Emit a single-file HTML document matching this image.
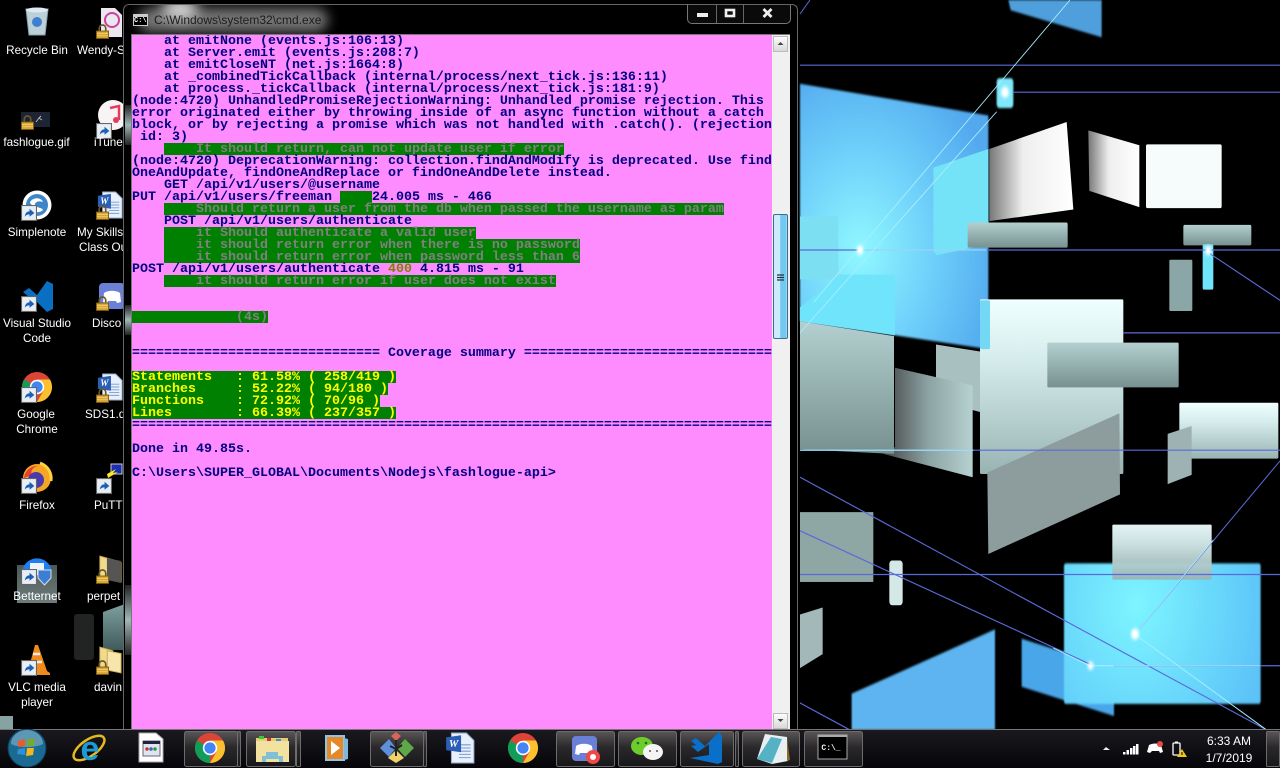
<!DOCTYPE html>
<html><head><meta charset="utf-8"><style>
html,body{margin:0;padding:0;background:#000;width:1280px;height:768px;overflow:hidden}
#bg{position:absolute;left:0;top:0}
#bg text{font-family:"Liberation Sans",sans-serif;font-size:11.7px;fill:#fff;text-anchor:middle}
#bg text.l{text-anchor:start}
#win{position:absolute;left:123px;top:4px;width:675px;height:726px;background:#000;border:1px solid #666;border-bottom:0;border-radius:6px 6px 0 0;box-sizing:border-box;overflow:hidden}
#glow{position:absolute;left:14px;top:3px;width:190px;height:24px;background:#8a8a8a;border-radius:12px;filter:blur(6px);opacity:.85}
#glow2{position:absolute;left:38px;top:-8px;width:36px;height:22px;background:#fff;border-radius:50%;filter:blur(7px);opacity:.8}
.sp{position:absolute;left:1px;width:6px;background:linear-gradient(#222,#9fb8b8 50%,#222)}
#title{position:absolute;left:30px;top:8px;font:12px "Liberation Sans",sans-serif;color:#1c1c1c;white-space:pre}
#ico{position:absolute;left:9px;top:9px;width:15px;height:12px;background:#000;border:1px solid #ccc;border-top:3px solid #ccc;box-sizing:border-box;color:#fff;font:bold 7px/8px "Liberation Mono",monospace;overflow:hidden}
#ctl{position:absolute;left:563px;top:-1px;width:104px;height:20px;border:1px solid #777;border-top:0;border-radius:0 0 5px 5px;box-sizing:border-box;background:#0a0a0a}
#ctl i{position:absolute;top:0;width:1px;height:19px;background:#666}
#inner{position:absolute;left:7px;top:29px;width:659px;height:696px;border:1px solid #777;border-bottom:0;box-sizing:border-box;background:#ff8cff}
#term{position:absolute;left:0;top:0;width:640px;height:696px;font:bold 13.34px/14px "Liberation Mono",monospace;color:#000080;white-space:pre;letter-spacing:0;overflow:hidden}
#term div{height:12px;line-height:14px}
.g,.y{display:inline-block;height:12px;line-height:14px;vertical-align:top;overflow:visible}
.g{background:#008000;color:#808080}.y{background:#008000;color:#ff0}.o{color:#808000}
#sb{position:absolute;left:640px;top:0;width:18px;height:696px;background:#f0f0f0}
.btn{position:absolute;left:1px;width:15px;height:16px;background:linear-gradient(#fdfdfd,#d8d8d8);border:1px solid #bbb;box-sizing:border-box}
#thumb{position:absolute;left:1px;top:179px;width:15px;height:125px;box-sizing:border-box;border:1px solid #3a6c94;border-radius:2px;background:linear-gradient(90deg,#cdeafa 0,#cdeafa 45%,#72c8ef 50%,#72c8ef 90%,#b4e2f7 100%)}
#tb{position:absolute;left:0;top:729px;width:1280px;height:39px;background:linear-gradient(rgba(26,26,32,.95),rgba(6,6,10,.95));border-top:1px solid #777;box-sizing:border-box}
#tbi{position:absolute;left:0;top:729px}
#tbi text{font-family:"Liberation Sans",sans-serif;font-size:12px;fill:#fff;text-anchor:middle}
</style></head><body>
<svg id="bg" width="1280" height="768" viewBox="0 0 1280 768">
<defs>
<filter id="b" x="-10%" y="-10%" width="120%" height="120%"><feGaussianBlur stdDeviation="2"/></filter>
<filter id="s" x="-50%" y="-50%" width="200%" height="200%"><feGaussianBlur stdDeviation="4"/></filter>
<linearGradient id="gw" x1="0" x2="1" y1="0" y2="0"><stop offset="0" stop-color="#777"/><stop offset=".4" stop-color="#eee"/><stop offset="1" stop-color="#fff"/></linearGradient>
<linearGradient id="gv" x1="0" x2="0" y1="0" y2="1"><stop offset="0" stop-color="#f0ffff"/><stop offset=".35" stop-color="#d5ecec"/><stop offset="1" stop-color="#99b3b3"/></linearGradient>
<linearGradient id="gb" x1="0" x2="0" y1="0" y2="1"><stop offset="0" stop-color="#b3cfcf"/><stop offset="1" stop-color="#76918f"/></linearGradient>
<linearGradient id="gd" x1="0" x2="1" y1="0" y2="0"><stop offset="0" stop-color="#444"/><stop offset=".5" stop-color="#8ca3a3"/><stop offset="1" stop-color="#b7d0d0"/></linearGradient>
<linearGradient id="gt" x1="0" x2="0" y1="0" y2="1"><stop offset="0" stop-color="#7fa0a0"/><stop offset="1" stop-color="#3f5a5a"/></linearGradient>
<linearGradient id="gg" x1="0" x2="0" y1="0" y2="1"><stop offset="0" stop-color="#5f6f6f"/><stop offset="1" stop-color="#8a9a9a"/></linearGradient>
<radialGradient id="gc" gradientUnits="userSpaceOnUse" cx="180" cy="540" r="430"><stop offset="0" stop-color="#8ff8ff"/><stop offset=".5" stop-color="#6fd0fa"/><stop offset="1" stop-color="#52a8ee"/></radialGradient>
<radialGradient id="gk" gradientUnits="userSpaceOnUse" cx="1010" cy="1300" r="400"><stop offset="0" stop-color="#7cf5ff"/><stop offset="1" stop-color="#5cc2f8"/></radialGradient>
<symbol id="lock" viewBox="0 0 14 15"><path d="M3.500 8V4a3.500 3.500 0 0 1 7 0v4" fill="none" stroke="#6b5a2a" stroke-width="1.800"/><rect x="0.500" y="7" width="13" height="8" fill="#d9a531" stroke="#7a5a14"/><path d="M1 9.500h12M1 12h12" stroke="#f0ce72"/></symbol>
<symbol id="sc" viewBox="0 0 15 15"><rect x=".5" y=".5" width="14" height="14" fill="#e8eef4" stroke="#666"/><path d="M3.500 11 C4 7 6 6 8 6 V3.500 L12.500 7.500 8 11 V8.800 C6 8.800 4.500 9.500 3.500 11Z" fill="#1c5fb4"/></symbol>
<symbol id="chrome" viewBox="0 0 30 30"><circle cx="15" cy="15" r="15" fill="#db4437"/><path d="M15 15 L2 7.500 A15 15 0 0 0 15 30 Z" fill="#0f9d58"/><path d="M15 7.500 H28 A15 15 0 0 1 15 30 L21.500 18.800Z" fill="#fbc02d"/><circle cx="15" cy="15" r="7.200" fill="#fff"/><circle cx="15" cy="15" r="5.600" fill="#4285f4"/></symbol>
<symbol id="doc" viewBox="0 0 28 30"><path d="M6 1h14l7 7v21H6z" fill="#e8f0fb" stroke="#9ab0d0"/><path d="M13 12h11M13 15h11M13 18h11M13 21h11M13 24h11" stroke="#7a9bd0"/><path d="M1 5 L15 3 V19 L1 17Z" fill="#2b5fb5"/><text x="8" y="14" style="font:bold italic 10px 'Liberation Serif',serif;fill:#fff;text-anchor:middle">W</text></symbol>
<symbol id="fold" viewBox="0 0 26 32"><path d="M2 2 L16 6 V28 L2 24Z" fill="#f1d98e" stroke="#c9a850"/><path d="M10 6 L25 9 V30 L10 27Z" fill="#f6e6ad" stroke="#c9a850"/></symbol>
</defs>
<rect width="1280" height="768" fill="#000"/>

<!-- desktop behind icons -->
<path d="M17 565h40v38H17z" fill="url(#gg)" opacity=".8"/>
<rect x="74" y="614" width="20" height="46" rx="3" fill="#222424"/>
<path d="M103 612 L125 604 V650 H103Z" fill="url(#gt)"/>
<rect x="0" y="716" width="13" height="14" fill="#86a2a2"/>

<!-- wallpaper -->
<g transform="translate(800,0) scale(.33333,.46556)">
<g filter="url(#b)">
<path d="M625 0H905V80L632 22Z" fill="#4f9fdc"/>
<path d="M0 180 L565 248 V750 L285 720 L0 690Z" fill="url(#gc)"/>
<path d="M155 1490 L585 1352 V1568 H155Z" fill="#5db4f0"/>
<path d="M665 1372 L942 1435 V1538 L665 1475Z" fill="#4aa6e8"/>
<rect x="792" y="1210" width="590" height="302" rx="6" fill="url(#gk)"/>
<rect x="590" y="168" width="50" height="64" rx="8" fill="#7fe8fb"/>
</g>
<path d="M400 360 L565 320 V525 L410 548 L400 540Z" fill="#74e2f7"/>
<path d="M0 465H115V600H0Z" fill="#7ddff2"/>
<path d="M120 590H285V720L0 690V660Z" fill="#6fe4fa"/>
<path d="M568 320 L800 262 L820 450 L568 475Z" fill="url(#gw)"/>
<path d="M865 280 L1018 312 V445 L868 410Z" fill="url(#gw)"/>
<rect x="1038" y="310" width="227" height="137" rx="4" fill="#f6fbfb"/>
<rect x="503" y="478" width="300" height="54" rx="4" fill="url(#gb)"/>
<rect x="1150" y="483" width="204" height="44" rx="4" fill="url(#gb)"/>
<rect x="1208" y="525" width="32" height="97" rx="4" fill="#6fe4fa"/>
<rect x="1108" y="558" width="69" height="110" rx="3" fill="#8aa6a6"/>
<path d="M408 740 L540 755 V885 L408 860Z" fill="#a8c0c0"/>
<rect x="540" y="643" width="430" height="375" rx="3" fill="url(#gv)"/>
<rect x="540" y="645" width="30" height="105" rx="4" fill="#74d8f5"/>
<path d="M285 790 L518 828 V1025 L250 975 L285 960Z" fill="url(#gd)"/>
<path d="M0 690 L282 722 V975 L0 965Z" fill="url(#gb)"/>
<rect x="742" y="736" width="394" height="96" rx="3" fill="url(#gb)"/>
<rect x="1138" y="865" width="297" height="120" rx="3" fill="url(#gv)"/>
<path d="M1103 932 L1175 915 V1020 L1103 1040Z" fill="#9db3b3"/>
<path d="M562 1015 L958 888 L960 1062 L565 1190Z" fill="#8d9c9c"/>
<rect x="0" y="1100" width="220" height="150" fill="#8ea6a4"/>
<rect x="268" y="1204" width="40" height="96" rx="8" fill="#d4e8e8"/>
<path d="M0 1320 L68 1305 V1405 L0 1435Z" fill="#a3b8b8"/>
<rect x="937" y="1127" width="298" height="118" rx="3" fill="url(#gv)" opacity=".95"/>
<g stroke="#5a6ad8" stroke-width="2.600" fill="none">
<path d="M0 140H1440M640 198H1440M0 537H1440M970 715H1440M0 967H1440M0 1234H1440M940 1430H1440"/>
<path d="M1230 545 L1440 645M0 1025 L1400 1568M0 1140 L880 1430M0 1510 L150 1568M1020 1350 L1440 990"/>
<path d="M0 30 L30 0"/>
</g>
<g stroke="#a9efff" stroke-width="2.200" fill="none">
<path d="M0 715 L590 240M40 650 L810 0M180 537H560M0 967H520M1020 1350 L1240 1160M760 1392 L870 1430M1000 1360 L1400 1568M870 1430H1380"/>
</g>
<g filter="url(#s)" fill="#fff"><circle cx="615" cy="198" r="12"/><circle cx="180" cy="537" r="10"/><circle cx="1225" cy="538" r="10"/><circle cx="1005" cy="1362" r="12"/><circle cx="872" cy="1430" r="9"/></g>
</g>

<!-- col 1 icons -->
<path d="M26 9h22l-3 26H29z" fill="#bcd0da" stroke="#8aa0aa"/><ellipse cx="37" cy="10" rx="11" ry="2.500" fill="#dfeaf0"/><circle cx="37" cy="22" r="5" fill="#3f7fd0"/>
<text x="37" y="54">Recycle Bin</text>
<rect x="21" y="112" width="29" height="15" fill="#1d2433"/><path d="M36 122l3-4 3 2M39 118l2-2" stroke="#bbb" fill="none"/><use href="#lock" x="21" y="115" width="13" height="15"/>
<text x="36.500" y="146">fashlogue.gif</text>
<circle cx="37" cy="205" r="14.500" fill="#fff"/><circle cx="37" cy="205" r="11" fill="#3f86c8"/><path d="M30 202c4-6 12-4 13 0-3-1-7-1-8 2-1 4 7 3 8 6-3 3-10 3-13 0 3 0 7 0 7-2s-7-2-7-6z" fill="#fff"/><use href="#sc" x="21" y="205" width="16" height="16"/>
<text x="37" y="236">Simplenote</text>
<path d="M23 292 L29 288 L37 295 L47 281 L53 284 V309 L47 312 L37 302 L29 309 L23 306 L30 298Z" fill="#0a6fc2"/><use href="#sc" x="21" y="296" width="16" height="16"/>
<text x="37" y="327">Visual Studio</text><text x="37" y="342">Code</text>
<use href="#chrome" x="22" y="372" width="30" height="30"/><use href="#sc" x="21" y="387" width="16" height="16"/>
<text x="36" y="418">Google</text><text x="37" y="433">Chrome</text>
<circle cx="37" cy="478" r="14" fill="#f5a623"/><path d="M24 478a13 13 0 0 1 14-12c-5 1-8 5-6 9z" fill="#e8402f"/><circle cx="36" cy="480" r="8" fill="#4a3ab0"/><path d="M40 463c8 3 12 10 11 18" stroke="#ffd23f" stroke-width="3" fill="none"/><use href="#sc" x="21" y="478" width="16" height="16"/>
<text x="37" y="509">Firefox</text>
<path d="M23 568a15 15 0 0 1 28 0v8H23z" fill="#1e7ff0"/><path d="M30 563h14v12H30z" fill="#eef4fa"/><use href="#sc" x="21" y="569" width="16" height="16"/><path d="M38 570h13v8l-6.500 7-6.500-7z" fill="#3a7fd5" stroke="#ddd"/>
<text x="37" y="600">Betternet</text>
<path d="M35 645h3l9 26 3 2v2H25v-2l3-2z" fill="#f08a1d"/><path d="M33 654h7M31 662h11" stroke="#eee" stroke-width="2.500"/><use href="#sc" x="21" y="660" width="16" height="16"/>
<text x="37" y="691">VLC media</text><text x="37" y="706">player</text>

<!-- col 2 icons -->
<path d="M101 8h14l7 7v22h-21z" fill="#e8e8ee"/><circle cx="112" cy="20" r="7" fill="none" stroke="#d0409a" stroke-width="2"/><use href="#lock" x="96" y="24" width="13" height="15"/>
<text class="l" x="77" y="54">Wendy-S</text>
<circle cx="113" cy="115" r="15" fill="#f8f4f6"/><path d="M110 108l9-2v14" stroke="#e83a5a" stroke-width="2.500" fill="none"/><circle cx="116" cy="120" r="3" fill="#e83a5a"/><use href="#sc" x="96" y="123" width="16" height="16"/>
<text class="l" x="94" y="146">iTunes</text>
<use href="#doc" x="97" y="190" width="26" height="30"/><use href="#lock" x="96" y="205" width="13" height="15"/>
<text class="l" x="77" y="236">My Skills</text><text class="l" x="79" y="251">Class Ou</text>
<rect x="99" y="283" width="26" height="26" rx="4" fill="#6a7fd6"/><path d="M104 293c4-3 12-3 16 0l1 9-4 1-1-2h-8l-1 2-4-1z" fill="#fff"/><use href="#lock" x="96" y="296" width="13" height="15"/>
<text class="l" x="92" y="327">Disco</text>
<use href="#doc" x="97" y="372" width="26" height="30"/><use href="#lock" x="96" y="388" width="13" height="15"/>
<text class="l" x="85" y="418">SDS1.d</text>
<rect x="111" y="464" width="11" height="10" fill="#1c2fb0" stroke="#ccc"/><path d="M107 474l9-5-3 4 5-1-10 6z" fill="#ffe622"/><use href="#sc" x="96" y="478" width="16" height="16"/>
<text class="l" x="94" y="509">PuTT</text>
<use href="#fold" x="98" y="553" width="24" height="32"/><path d="M107 558l14 3v22l-14-3z" fill="#555"/><use href="#lock" x="96" y="569" width="13" height="15"/>
<text class="l" x="87" y="600">perpet</text>
<use href="#fold" x="98" y="644" width="24" height="32"/><use href="#lock" x="96" y="660" width="13" height="15"/>
<text class="l" x="94" y="691">davin</text>
</svg>

<div id="win">
<div class="sp" style="top:100px;height:40px"></div>
<div class="sp" style="top:300px;height:30px"></div>
<div class="sp" style="top:580px;height:70px"></div>
<div id="glow"></div>
<div id="glow2"></div>
<div id="ico">C:\</div>
<div id="title">C:\Windows\system32\cmd.exe</div>
<div id="ctl">
<i style="left:28px"></i><i style="left:55px"></i>
<svg width="104" height="19" style="position:absolute;left:0;top:0">
<rect x="9" y="9" width="11" height="4" fill="#eee"/>
<rect x="38" y="6" width="8" height="6" fill="none" stroke="#eee" stroke-width="2.600"/>
<path d="M75.500 5l8 8M83.500 5l-8 8" stroke="#eee" stroke-width="2.800"/>
</svg>
</div>
<div id="inner">
<div id="term"><div>    at emitNone (events.js:106:13)</div><div>    at Server.emit (events.js:208:7)</div><div>    at emitCloseNT (net.js:1664:8)</div><div>    at _combinedTickCallback (internal/process/next_tick.js:136:11)</div><div>    at process._tickCallback (internal/process/next_tick.js:181:9)</div><div>(node:4720) UnhandledPromiseRejectionWarning: Unhandled promise rejection. This</div><div>error originated either by throwing inside of an async function without a catch</div><div>block, or by rejecting a promise which was not handled with .catch(). (rejection</div><div> id: 3)</div><div>    <span class="g">    It should return, can not update user if error</span></div><div>(node:4720) DeprecationWarning: collection.findAndModify is deprecated. Use find</div><div>OneAndUpdate, findOneAndReplace or findOneAndDelete instead.</div><div>    GET /api/v1/users/@username</div><div>PUT /api/v1/users/freeman <span class="g">    </span>24.005 ms - 466</div><div>    <span class="g">    Should return a user from the db when passed the username as param</span></div><div>    POST /api/v1/users/authenticate</div><div>    <span class="g">    it Should authenticate a valid user</span></div><div>    <span class="g">    it should return error when there is no password</span></div><div>    <span class="g">    it should return error when password less than 6</span></div><div>POST /api/v1/users/authenticate <span class="o">400</span> 4.815 ms - 91</div><div>    <span class="g">    it should return error if user does not exist</span></div><div></div><div></div><div><span class="g">             (4s)</span></div><div></div><div></div><div>=============================== Coverage summary ===============================</div><div></div><div><span class="y">Statements   : 61.58% ( 258/419 )</span></div><div><span class="y">Branches     : 52.22% ( 94/180 )</span></div><div><span class="y">Functions    : 72.92% ( 70/96 )</span></div><div><span class="y">Lines        : 66.39% ( 237/357 )</span></div><div>================================================================================</div><div></div><div>Done in 49.85s.</div><div></div><div>C:\Users\SUPER_GLOBAL\Documents\Nodejs\fashlogue-api&gt;</div></div>
<div id="sb">
<div class="btn" style="top:1px"><svg width="13" height="14"><path d="M3.500 8l3-3 3 3z" fill="#444"/></svg></div>
<div id="thumb"><svg width="13" height="123"><path d="M3 60h7M3 62.500h7M3 65h7" stroke="#234" stroke-width="1.200"/></svg></div>
<div class="btn" style="top:678px"><svg width="13" height="14"><path d="M3.500 5l3 3 3-3z" fill="#444"/></svg></div>
</div>
</div>
</div>

<div id="tb"></div>
<svg id="tbi" width="1280" height="39" viewBox="0 729 1280 39">
<defs>
<linearGradient id="bt" x1="0" x2="0" y1="0" y2="1"><stop offset="0" stop-color="#5a5658"/><stop offset=".45" stop-color="#2a282a"/><stop offset="1" stop-color="#171719"/></linearGradient>
</defs>
<g fill="url(#bt)" stroke="#6c6c6c">
<rect x="296.500" y="731.500" width="4" height="35" rx="1"/>
<rect x="246.500" y="731.500" width="49" height="35" rx="2"/>
<rect x="184.500" y="731.500" width="53" height="35" rx="2"/>
<rect x="237.500" y="731.500" width="3" height="35" rx="1"/>
<rect x="423.500" y="731.500" width="3" height="35" rx="1"/>
<rect x="370.500" y="731.500" width="53" height="35" rx="2"/>
<rect x="556.500" y="731.500" width="58" height="35" rx="2"/>
<rect x="618.500" y="731.500" width="58" height="35" rx="2"/>
<rect x="735.500" y="731.500" width="3" height="35" rx="1"/>
<rect x="680.500" y="731.500" width="53" height="35" rx="2"/>
<rect x="742.500" y="731.500" width="57" height="35" rx="2"/>
<rect x="804.500" y="731.500" width="58" height="35" rx="2"/>
<rect x="1266.500" y="731.500" width="13" height="35" rx="1"/>
</g>
<!-- start orb -->
<circle cx="27" cy="748" r="19" fill="#1b6a92" stroke="#0d3f5c"/><path d="M11 744a16 14 0 0 1 32 0c-8 4-24 4-32 0z" fill="#6fa2bd" opacity=".8"/>
<path d="M18 741l7-2v7l-7 1z" fill="#ec5b27"/><path d="M27 739l8 0-1 7-7 0z" fill="#75ab2c"/><path d="M18 749l7-1v7l-8-1z" fill="#2c90d8"/><path d="M27 748l7 0-1 7-7 1z" fill="#f4b81e"/>
<!-- IE -->
<ellipse cx="89" cy="748" rx="18" ry="8" fill="none" stroke="#e7b91c" stroke-width="2.500" transform="rotate(-35 89 748)"/>
<text x="90" y="760" style="font:bold 34px 'Liberation Sans',sans-serif;fill:#1c9ad6;text-anchor:middle">e</text>
<!-- app doc -->
<path d="M139 733h17l7 6v23h-24z" fill="#fff" stroke="#aaa"/><rect x="143" y="741" width="17" height="15" fill="#dfe6ef" stroke="#667"/><rect x="143" y="741" width="17" height="3" fill="#224"/><circle cx="147" cy="749" r="1.800" fill="#c33"/><circle cx="151" cy="749" r="1.800" fill="#36c"/><circle cx="155" cy="749" r="1.800" fill="#393"/>
<use href="#chrome" x="195" y="733" width="30" height="30"/>
<!-- explorer -->
<path d="M256 738h32v14h-32z" fill="#e6cc7a"/><rect x="259" y="736" width="5" height="3" fill="#3c3"/><rect x="267" y="738" width="4" height="3" fill="#c33"/><rect x="276" y="739" width="5" height="3" fill="#39c"/><path d="M256 741h33v21h-33z" fill="#f3e29f"/><path d="M262 762v-6h4v-4h12v4h5v6h-4v-3h-13v3z" fill="#7fbfd8"/>
<!-- wmp -->
<rect x="326" y="736" width="18" height="24" fill="#e5882a" stroke="#8fc4e4" stroke-width="2"/><path d="M344 738l4 1v20l-4 1z" fill="#7fb8dc"/><path d="M331 741l9 7-9 7z" fill="#fff"/>
<!-- git -->
<path d="M391 736l5-4 5 4-5 5z" fill="#d9655a"/><path d="M380 748l9-9 7 9-7 9z" fill="#5e8fdc"/><path d="M397 748l8-9 9 9-9 9z" fill="#5fa84a"/><path d="M396 750l8 8-8 5-8-5z" fill="#edd36a"/><path d="M396 740v16M390 746l6 3 6-4" stroke="#222" stroke-width="2" fill="none"/>
<use href="#doc" x="445" y="732" width="30" height="32"/>
<use href="#chrome" x="508" y="733" width="30" height="30"/>
<!-- discord -->
<rect x="572" y="736" width="25" height="25" rx="4" fill="#6a7fd6"/><path d="M576 746c4-3 12-3 16 0l1 8-4 1-1-2h-8l-1 2-4-1z" fill="#fff"/><circle cx="593" cy="757" r="7" fill="#f04747"/><circle cx="593" cy="757" r="3" fill="#fff"/>
<!-- wechat -->
<ellipse cx="642" cy="746" rx="11" ry="9" fill="#6ecb2c"/><ellipse cx="653" cy="752" rx="10" ry="8" fill="#f4f4f4"/><circle cx="638" cy="743" r="1.300" fill="#263"/><circle cx="646" cy="743" r="1.300" fill="#263"/><circle cx="650" cy="751" r="1" fill="#555"/><circle cx="657" cy="751" r="1" fill="#555"/>
<!-- vscode -->
<path d="M691 741 L696 738 L705 746 L719 732 L722 736 V762 L718 764 L690 758 L709 755 V744 L698 752 L691 746 L696 745Z" fill="#0a6fc9"/>
<!-- notepad -->
<path d="M765 734l22 3 1 24-16 3-15-5z" fill="#e7eff2"/><path d="M757 759l14-22 11 2-10 24z" fill="#55b2c4"/><path d="M787 738l3 22-3 1z" fill="#8d6a2a"/>
<!-- cmd -->
<rect x="818" y="735" width="29" height="24" fill="#000" stroke="#aaa"/><rect x="818" y="735" width="29" height="2" fill="#aaa"/><text x="831" y="750" style="font:bold 8px 'Liberation Mono',monospace;fill:#eee;text-anchor:middle">C:\_</text>
<!-- tray -->
<path d="M1103 750l3-3 4 3z" fill="#eee"/>
<path d="M1123 752h2.500v2.500h-2.500zM1126.500 750h2.500v4.500h-2.500zM1130 748h2.500v6.500h-2.500zM1133 746h2.500v8.500h-2.500zM1136 744h2.500v10.500h-2.500z" fill="#fff"/>
<path d="M1149 745c4-2 9-2 12 0l2 7-3 1-1-2h-7l-2 2-3-1z" fill="#fff"/><circle cx="1160" cy="744" r="3" fill="#f04747"/>
<rect x="1173" y="743" width="7" height="12" rx="1" fill="none" stroke="#fff" stroke-width="1.300"/><rect x="1175" y="741.500" width="3" height="2" fill="#fff"/><path d="M1182 749l5 8h-10z" fill="#f4c51e"/><path d="M1182 752v3" stroke="#000"/>
<text x="1229" y="745">6:33 AM</text>
<text x="1229" y="762">1/7/2019</text>
</svg>
</body></html>
